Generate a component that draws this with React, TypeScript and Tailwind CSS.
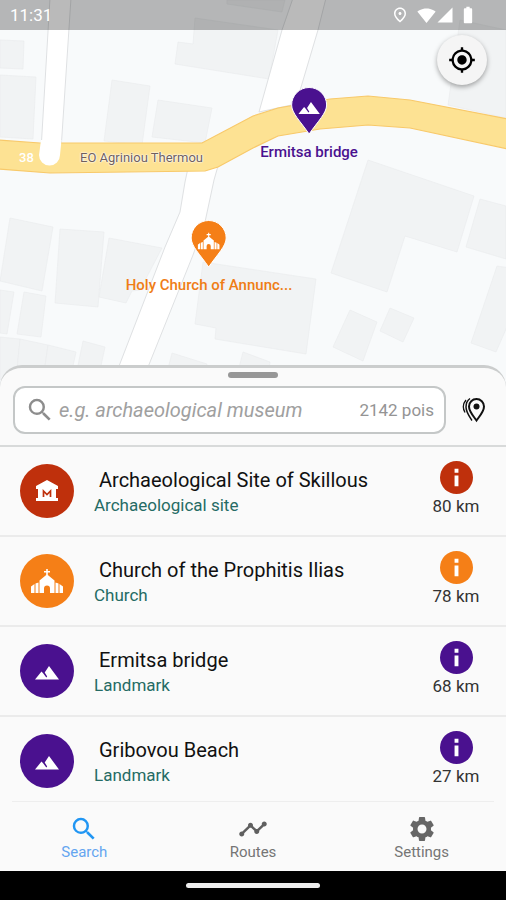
import React from "react";
import {
  MdBatteryFull,
  MdMyLocation,
  MdOutlinePlace,
  MdSearch,
  MdSettings,
  MdSignalCellular4Bar,
  MdSignalWifi4Bar,
  MdTimeline,
} from "react-icons/md";

type Kind = "museum" | "church" | "landmark";

interface Poi {
  name: string;
  category: string;
  distance: string;
  kind: Kind;
}

const POIS: Poi[] = [
  { name: "Archaeological Site of Skillous", category: "Archaeological site", distance: "80 km", kind: "museum" },
  { name: "Church of the Prophitis Ilias", category: "Church", distance: "78 km", kind: "church" },
  { name: "Ermitsa bridge", category: "Landmark", distance: "68 km", kind: "landmark" },
  { name: "Gribovou Beach", category: "Landmark", distance: "27 km", kind: "landmark" },
];

const BACKGROUND: Record<Kind, string> = {
  museum: "bg-[#bf300c]",
  church: "bg-[#f57f17]",
  landmark: "bg-[#4a118f]",
};

const FOREGROUND: Record<Kind, string> = {
  museum: "text-[#bf300c]",
  church: "text-[#f57f17]",
  landmark: "text-[#4a118f]",
};

const BUILDINGS = [
  "0,40 24,41 23,69 0,68",
  "0,75 36,77 33,139 0,137",
  "112,80 150,86 142,145 104,141",
  "158,100 212,108 205,143 152,137",
  "178,42 193,44 195,18 278,30 269,79 175,64",
  "227,0 285,0 282,12 227,4",
  "10,218 53,227 42,291 0,281",
  "60,229 104,232 98,307 55,303",
  "109,238 162,248 140,290 132,291 126,303 99,297",
  "0,290 14,292 7,334 0,333",
  "24,292 46,296 41,337 17,334",
  "0,337 20,339 16,380 0,380",
  "20,339 48,345 43,380 16,380",
  "48,345 76,352 70,380 43,380",
  "83,341 105,347 98,380 75,380",
  "203,262 316,279 306,354 215,339 216,328 195,324",
  "172,353 207,364 205,380 165,380",
  "243,352 270,362 268,380 236,380",
  "368,160 474,196 457,252 405,236 387,292 331,273",
  "480,199 506,206 506,259 466,247",
  "497,266 510,268 510,320 496,352 471,343",
  "350,310 377,322 363,361 333,347",
  "390,308 414,318 403,342 380,331",
  "460,20 506,30 506,118 448,105",
];

function Glyph({ kind }: { kind: Kind }) {
  if (kind === "museum") {
    return (
      <svg viewBox="0 0 32 32" className="size-8" fill="none" aria-hidden="true">
        <path d="M16 5 27 11v3h-2v9h2v3H5v-3h2v-9H5v-3z" fill="#fff" />
        <path d="M12.500 22v-6l3.500 3.500 3.500-3.500v6" stroke="#bf300c" strokeWidth="1.700" />
      </svg>
    );
  }
  if (kind === "church") {
    return (
      <svg viewBox="0 0 32 26" className="w-full" fill="#fff" aria-hidden="true">
        <path d="M15.200 1h1.600v2H19v1.600h-2.200V7l6.700 5.500V25H19v-4.500a3 3 0 0 0-6 0V25H8.500V12.500L15.200 7V4.600H13V3h2.200z" />
        <path d="M7.500 14.500V25H4.500V15.500zM3.500 16v9H0v-6.500zM24.500 14.500V25h3v-9.500zM28.500 16v9H32v-6.500z" />
      </svg>
    );
  }
  return (
    <svg viewBox="0 0 24 14" className="w-full" fill="#fff" aria-hidden="true">
      <path d="m0 13.500 6.500-8 1.800 2 3 4 .9-.9-2.500-4L14 0l10 13.500z" />
    </svg>
  );
}

function Pin({ kind }: { kind: "church" | "landmark" }) {
  return (
    <span className={"relative " + FOREGROUND[kind]}>
      <svg viewBox="0 0 38 50" className="h-[50px] w-[38px]" aria-hidden="true">
        <path
          d="M19 1.500A17.500 17.500 0 0 0 1.500 19C1.500 27 10 35 19 48 28 35 36.500 27 36.500 19A17.500 17.500 0 0 0 19 1.500z"
          fill="currentColor"
          stroke="#fff"
          strokeWidth="1"
        />
      </svg>
      <span className="absolute inset-x-2 top-3.5 flex h-4 items-center justify-center">
        <Glyph kind={kind} />
      </span>
    </span>
  );
}

function InfoIcon() {
  return (
    <svg viewBox="0 0 34 34" className="size-[33px]" aria-hidden="true">
      <circle cx="17" cy="17" r="17" fill="currentColor" />
      <path d="M15 8h4v4h-4zM15 15h4v11h-4z" fill="#fff" />
    </svg>
  );
}

function NearbyIcon() {
  return (
    <svg viewBox="0 0 24 26" className="h-[26px] w-6" fill="none" stroke="#111" aria-hidden="true">
      <path
        d="M14.500 2A7.500 7.500 0 0 0 7 9.500c0 5 4 9 7.500 14 3.500-5 7.500-9 7.500-14A7.500 7.500 0 0 0 14.500 2z"
        strokeWidth="2"
      />
      <circle cx="14.500" cy="9.500" r="3" fill="#111" stroke="none" />
      <path d="M8 1.500C5 3.500 4 6.500 4 10c0 5 3 9 6 13.500" strokeWidth="1.500" />
      <path d="M4 3C1 6.500.5 11 3 15.500" strokeWidth="1.300" />
    </svg>
  );
}

function MapView() {
  return (
    <section aria-label="Map" className="relative h-[390px] shrink-0 overflow-hidden bg-[#f8fafb]">
      <svg viewBox="0 0 506 390" preserveAspectRatio="xMidYMid slice" className="size-full" aria-hidden="true">
        <g fill="#f1f3f4" stroke="#e9ebed" strokeWidth="0.600">
          {BUILDINGS.map((points) => (
            <polygon key={points} points={points} />
          ))}
        </g>
        <g fill="#fff" stroke="#dfe1e3" strokeWidth="1">
          <path d="M293-2 282 30 259 112 296 104 318 30 326-2z" />
          <path d="M188 168 185 182 180 212 165 247 109 392 138 392 193 255 205 222 214 180 218 166z" />
          <path d="M50-2 41 150H61L71-2z" />
        </g>
        <path
          d="M-2 140 40 143H202L253 116 278 108 330 99 368 96 410 100 508 119V149L410 128 368 125 320 129 278 136 253 148 218 167 205 171 50 173-2 169z"
          fill="#fde293"
          stroke="#f8c96a"
          strokeWidth="1.200"
        />
        <path d="M41 140 39 155a10.500 10.500 0 0 0 21 0L61.500 140z" fill="#fff" />
      </svg>

      <span className="absolute left-[19px] top-[150px] text-[13px] font-medium leading-4 text-white">38</span>
      <span className="absolute left-[80px] top-[150px] whitespace-nowrap text-[13px] leading-4 text-[#705f5c] [text-shadow:0_0_2px_#fff,0_0_2px_#fff,0_0_1px_#fff]">
        EO Agriniou Thermou
      </span>

      <button
        type="button"
        className="absolute left-[309px] top-[86px] flex -translate-x-1/2 flex-col items-center text-[#4a118f]"
      >
        <Pin kind="landmark" />
        <span className="mt-2 whitespace-nowrap text-[15px] font-medium leading-4">Ermitsa bridge</span>
      </button>
      <button
        type="button"
        className="absolute left-[209px] top-[219px] flex -translate-x-1/2 flex-col items-center text-[#ef7d16]"
      >
        <Pin kind="church" />
        <span className="mt-2 whitespace-nowrap text-[15px] font-medium leading-4">Holy Church of Annunc...</span>
      </button>

      <header className="absolute inset-x-0 top-0 flex h-[30px] items-center justify-between bg-black/27 pl-2.5 pr-7 text-white">
        <span className="text-[17px] leading-5">11:31</span>
        <span className="flex items-center">
          <MdOutlinePlace className="mr-2 size-[18px]" />
          <MdSignalWifi4Bar className="size-[19px]" />
          <MdSignalCellular4Bar className="mr-1 size-[18px]" />
          <MdBatteryFull className="size-5" />
        </span>
      </header>

      <button
        type="button"
        aria-label="My location"
        className="absolute right-[19px] top-[35px] flex size-[50px] items-center justify-center rounded-full bg-[#f5f5f5] text-black shadow-[0_2px_5px_rgba(0,0,0,0.35)]"
      >
        <MdMyLocation className="size-7" />
      </button>
    </section>
  );
}

function PoiRow({ poi }: { poi: Poi }) {
  return (
    <li className="flex h-[90px] items-center border-b-2 border-[#ebebeb] pl-5 pr-6">
      <span className={"flex size-[54px] shrink-0 items-center justify-center rounded-full " + BACKGROUND[poi.kind]}>
        <span
          className={
            poi.kind === "landmark" ? "mt-1 flex w-6 justify-center" : "flex w-8 justify-center"
          }
        >
          <Glyph kind={poi.kind} />
        </span>
      </span>
      <div className="ml-5 min-w-0 flex-1 pt-0.5">
        <h2 className="truncate pl-[5px] text-[20px] font-normal leading-[26px] text-[#111]">{poi.name}</h2>
        <p className="text-[17px] leading-6 text-[#256b64]">{poi.category}</p>
      </div>
      <div className="flex w-[52px] shrink-0 flex-col items-center pb-1">
        <button type="button" aria-label={"About " + poi.name} className={FOREGROUND[poi.kind]}>
          <InfoIcon />
        </button>
        <span className="whitespace-nowrap text-[17px] leading-6 text-[#333]">{poi.distance}</span>
      </div>
    </li>
  );
}

export default function App() {
  return (
    <div className="flex h-screen flex-col overflow-hidden bg-[#fafafa] font-[Roboto,sans-serif]">
      <MapView />

      <main className="relative -mt-[25px] flex min-h-0 flex-1 flex-col overflow-hidden rounded-t-[22px] border-t-[3px] border-[#cbcdcd] bg-[#fafafa]">
        <div className="shrink-0 border-b-2 border-[#d8dada] pb-[11px] pt-1">
          <div className="mx-auto h-[6px] w-[50px] rounded-full bg-[#979797]" />
          <div className="mt-2 flex items-center pl-[13px] pr-5">
            <div className="flex h-12 min-w-0 flex-1 items-center rounded-xl border-2 border-[#c4c7c7] bg-white px-2.5">
              <label htmlFor="poi-search" className="shrink-0">
                <MdSearch className="size-[30px] text-[#8d8d8d]" />
              </label>
              <input
                id="poi-search"
                type="text"
                aria-label="Search points of interest"
                placeholder="e.g. archaeological museum"
                className="ml-1 h-8 min-w-0 flex-1 bg-transparent text-[20px] italic leading-8 outline-none placeholder:text-[#a0a0a0]"
              />
              <span className="shrink-0 text-[17px] leading-6 text-[#949494]">2142 pois</span>
            </div>
            <button type="button" aria-label="Nearby places" className="ml-4">
              <NearbyIcon />
            </button>
          </div>
        </div>
        <ul className="min-h-0 flex-1 overflow-y-auto [scrollbar-width:none]">
          {POIS.map((poi) => (
            <PoiRow key={poi.name} poi={poi} />
          ))}
        </ul>
      </main>

      <nav className="shrink-0 bg-[#fafafa]">
        <div className="mx-3 h-px bg-[#eeeeee]" />
        <div className="grid h-[69px] grid-cols-3 text-[15px] leading-4 text-[#757575]">
          <button type="button" aria-current="page" className="flex flex-col items-center pt-3 text-[#64a5f0]">
            <MdSearch className="size-[30px] text-[#2196f3]" />
            Search
          </button>
          <button type="button" className="flex flex-col items-center pt-3">
            <MdTimeline className="size-[30px] text-[#5f5f5f]" />
            Routes
          </button>
          <button type="button" className="flex flex-col items-center pt-3">
            <MdSettings className="size-[30px] text-[#666]" />
            Settings
          </button>
        </div>
      </nav>

      <footer className="flex h-[29px] shrink-0 items-center justify-center bg-black">
        <div className="h-[5px] w-[134px] rounded-full bg-[#ededed]" />
      </footer>
    </div>
  );
}
